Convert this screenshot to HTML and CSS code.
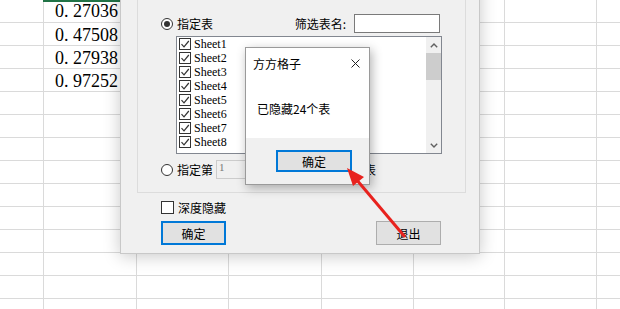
FILE: index.html
```html
<!DOCTYPE html>
<html lang="zh-CN">
<head>
    <meta charset="UTF-8" />
    <title>隐藏工作表</title>
    <link rel="stylesheet" href="styles.css">
</head>
<body>

<div class="sheet">
    <div class="cells">
        <div class="cell sel">0. 27036</div>
        <div class="cell">0. 47508</div>
        <div class="cell">0. 27938</div>
        <div class="cell">0. 97252</div>
    </div>
</div>

<div class="dialog">
    <div class="group">
        <div class="row first">
            <label class="opt"><span class="radio on"></span>指定表</label>
            <span class="filter">筛选表名:</span>
            <span class="field"></span>
        </div>
        <div class="list">
            <div class="items">
                <div class="item"><span class="check"><svg viewBox="0 0 10 10"><path d="M1.5 5.2 L4 7.8 L8.8 2"/></svg></span>Sheet1</div>
                <div class="item"><span class="check"><svg viewBox="0 0 10 10"><path d="M1.5 5.2 L4 7.8 L8.8 2"/></svg></span>Sheet2</div>
                <div class="item"><span class="check"><svg viewBox="0 0 10 10"><path d="M1.5 5.2 L4 7.8 L8.8 2"/></svg></span>Sheet3</div>
                <div class="item"><span class="check"><svg viewBox="0 0 10 10"><path d="M1.5 5.2 L4 7.8 L8.8 2"/></svg></span>Sheet4</div>
                <div class="item"><span class="check"><svg viewBox="0 0 10 10"><path d="M1.5 5.2 L4 7.8 L8.8 2"/></svg></span>Sheet5</div>
                <div class="item"><span class="check"><svg viewBox="0 0 10 10"><path d="M1.5 5.2 L4 7.8 L8.8 2"/></svg></span>Sheet6</div>
                <div class="item"><span class="check"><svg viewBox="0 0 10 10"><path d="M1.5 5.2 L4 7.8 L8.8 2"/></svg></span>Sheet7</div>
                <div class="item"><span class="check"><svg viewBox="0 0 10 10"><path d="M1.5 5.2 L4 7.8 L8.8 2"/></svg></span>Sheet8</div>
            </div>
            <div class="scroll">
                <div class="arrow-btn"><svg viewBox="0 0 8 5"><path d="M0.8 4.2 L4 1 L7.2 4.2"/></svg></div>
                <div class="thumb"></div>
                <div class="track"></div>
                <div class="arrow-btn"><svg viewBox="0 0 8 5"><path d="M0.8 0.8 L4 4 L7.2 0.8"/></svg></div>
            </div>
        </div>
        <div class="row second">
            <label class="opt"><span class="radio"></span>指定第</label>
            <span class="field num">1</span>
            <span class="suffix">表</span>
        </div>
    </div>
    <label class="opt deep"><span class="check"></span>深度隐藏</label>
    <div class="actions">
        <button class="btn primary">确定</button>
        <button class="btn">退出</button>
    </div>
</div>

<div class="msgbox">
    <div class="msg-title">
        <span>方方格子</span>
        <svg class="close" viewBox="0 0 9 9"><path d="M0.5 0.5 L8.5 8.5 M8.5 0.5 L0.5 8.5"/></svg>
    </div>
    <div class="msg-body">已隐藏24个表</div>
    <div class="msg-foot">
        <button class="btn primary wide">确定</button>
    </div>
</div>

<!-- red pointer drawn over the screenshot -->
<svg class="pointer" viewBox="0 0 620 309">
    <line x1="405" y1="237" x2="356" y2="179" />
    <polygon points="347,168 364,177 353,186" />
</svg>

</body>
</html>
```

FILE: styles.css
```css
body {
    margin: 0;
    width: 620px;
    height: 309px;
    overflow: hidden;
    position: relative;
    font-family: "Noto Sans CJK SC", "Liberation Sans", sans-serif;
    font-size: 12px;
    color: #000;
    background: #fff;
}

/* spreadsheet behind the dialogs */
.sheet {
    height: 309px;
    background:
        linear-gradient(#dadada, #dadada) 43px 0 / 1px 100% no-repeat,
        linear-gradient(#dadada, #dadada) 136px 0 / 1px 100% no-repeat,
        linear-gradient(#dadada, #dadada) 228px 0 / 1px 100% no-repeat,
        linear-gradient(#dadada, #dadada) 321px 0 / 1px 100% no-repeat,
        linear-gradient(#dadada, #dadada) 413px 0 / 1px 100% no-repeat,
        linear-gradient(#dadada, #dadada) 504px 0 / 1px 100% no-repeat,
        linear-gradient(#dadada, #dadada) 596px 0 / 1px 100% no-repeat,
        repeating-linear-gradient(to bottom, #fff 0 22px, #dadada 22px 23px);
}
.cells {
    margin-left: 43px;
    width: 93px;
}
.cell {
    height: 23px;
    line-height: 23px;
    padding-left: 12px;
    font-family: "Liberation Serif", serif;
    font-size: 18px;
    white-space: nowrap;
    box-sizing: border-box;
}
.cell + .cell {
    padding-top: 1px;
}
.sel {
    box-shadow: inset 0 2px #217346;
}

/* main dialog */
.dialog {
    position: absolute;
    left: 120px;
    top: -30px;
    width: 358px;
    padding: 9px 0 8px;
    border: 1px solid #c8c8c8;
    background: #f0f0f0;
    box-shadow: 0 2px 16px rgba(0, 0, 0, 0.22);
}
.group {
    margin: 0 13px 0 16px;
    padding: 0 23px 13px 23px;
    border: 1px solid #dcdcdc;
}
.row {
    display: flex;
    align-items: center;
    height: 19px;
}
.row.first {
    margin-top: 33px;
}
.row.second {
    margin-top: 6px;
}
.opt {
    display: flex;
    align-items: center;
    gap: 4px;
    line-height: 14px;
}
.radio {
    width: 10px;
    height: 10px;
    border: 1px solid #333;
    border-radius: 50%;
    background: #fff;
    position: relative;
}
.radio.on::after {
    content: "";
    position: absolute;
    left: 2px;
    top: 2px;
    width: 6px;
    height: 6px;
    border-radius: 50%;
    background: #333;
}
.filter {
    margin-left: auto;
    margin-right: 8px;
}
.field {
    width: 84px;
    height: 17px;
    margin-right: 2px;
    border: 1px solid #7a7a7a;
    background: #fff;
}
.field.num {
    width: 140px;
    margin: 0 0 0 3px;
    padding-left: 2px;
    border-color: #cccccc;
    background: #f0f0f0;
    color: #777;
    font-family: "Liberation Serif", serif;
    font-size: 11px;
    line-height: 13px;
}
.suffix {
    margin-left: 4px;
}

.list {
    display: flex;
    height: 116px;
    margin: 3px 0 0 15px;
    border: 1px solid #828790;
    background: #fff;
}
.items {
    flex: 1;
}
.item {
    display: flex;
    align-items: center;
    gap: 3px;
    height: 14px;
    padding-left: 2px;
    font-family: "Liberation Serif", serif;
    font-size: 12px;
}
.check {
    width: 10px;
    height: 10px;
    border: 1px solid #333;
    background: #fff;
    display: flex;
}
.check svg {
    width: 10px;
    height: 10px;
    fill: none;
    stroke: #333;
    stroke-width: 1.2;
}
.scroll {
    width: 15px;
    display: flex;
    flex-direction: column;
    background: #f0f0f0;
}
.arrow-btn {
    height: 16px;
    display: flex;
    align-items: center;
    justify-content: center;
}
.arrow-btn svg {
    width: 8px;
    height: 5px;
    fill: none;
    stroke: #606060;
    stroke-width: 1.4;
}
.thumb {
    height: 27px;
    background: #cdcdcd;
}
.track {
    flex: 1;
}

.deep {
    margin: 8px 0 0 40px;
    height: 13px;
}
.deep .check {
    width: 11px;
    height: 11px;
}
.actions {
    display: flex;
    justify-content: space-between;
    margin: 7px 38px 0 40px;
}
.btn {
    width: 65px;
    height: 24px;
    padding: 0;
    border: 1px solid #adadad;
    background: #e1e1e1;
    font-family: "Noto Sans CJK SC", sans-serif;
    font-size: 12px;
    color: #000;
}
.btn.primary {
    border: 2px solid #0078d7;
}
.btn.wide {
    width: 76px;
    height: 22px;
}

/* message box */
.msgbox {
    position: absolute;
    left: 245px;
    top: 47px;
    width: 123px;
    border: 1px solid #9a9a9a;
    background: #fff;
    box-shadow: 2px 3px 10px rgba(0, 0, 0, 0.3);
}
.msg-title {
    display: flex;
    align-items: center;
    justify-content: space-between;
    height: 30px;
    padding: 0 9px 0 7px;
    font-size: 12px;
}
.close {
    width: 9px;
    height: 9px;
    fill: none;
    stroke: #222;
    stroke-width: 1;
}
.msg-body {
    display: flex;
    align-items: center;
    height: 60px;
    padding-left: 11px;
}
.msg-foot {
    display: flex;
    justify-content: flex-end;
    height: 46px;
    padding: 12px 17px 0 0;
    box-sizing: border-box;
    background: #f0f0f0;
}

.pointer {
    position: absolute;
    left: 0;
    top: 0;
    width: 620px;
    height: 309px;
    pointer-events: none;
}
.pointer line {
    stroke: #e8221e;
    stroke-width: 3;
}
.pointer polygon {
    fill: #e8221e;
}
```
